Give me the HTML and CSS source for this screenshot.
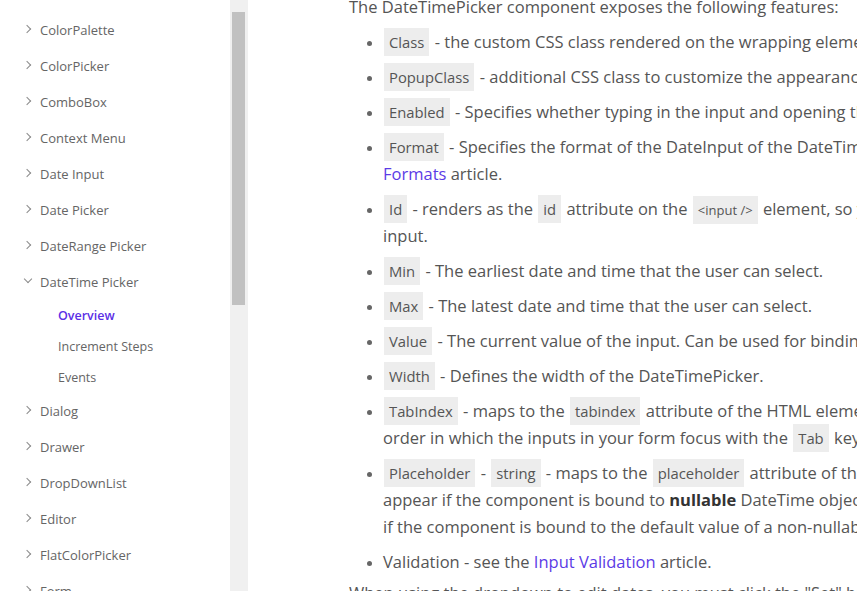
FILE: index.html
```html
<!DOCTYPE html>
<html lang="en">

<head>
    <meta charset="UTF-8">
    <meta name="viewport" content="width=device-width, initial-scale=1.0">
    <title>DateTimePicker Overview</title>
    <link rel="stylesheet" href="styles.css">
</head>

<body>
    <aside class="side-nav">
        <ul class="nav-tree">
            <li class="nav-item"><span class="chevron"></span>ColorPalette</li>
            <li class="nav-item"><span class="chevron"></span>ColorPicker</li>
            <li class="nav-item"><span class="chevron"></span>ComboBox</li>
            <li class="nav-item"><span class="chevron"></span>Context Menu</li>
            <li class="nav-item"><span class="chevron"></span>Date Input</li>
            <li class="nav-item"><span class="chevron"></span>Date Picker</li>
            <li class="nav-item"><span class="chevron"></span>DateRange Picker</li>
            <li class="nav-item open"><span class="chevron"></span>DateTime Picker</li>
            <li class="nav-sub active">Overview</li>
            <li class="nav-sub">Increment Steps</li>
            <li class="nav-sub">Events</li>
            <li class="nav-item"><span class="chevron"></span>Dialog</li>
            <li class="nav-item"><span class="chevron"></span>Drawer</li>
            <li class="nav-item"><span class="chevron"></span>DropDownList</li>
            <li class="nav-item"><span class="chevron"></span>Editor</li>
            <li class="nav-item"><span class="chevron"></span>FlatColorPicker</li>
            <li class="nav-item"><span class="chevron"></span>Form</li>
        </ul>
    </aside>
    <div class="scroll-track">
        <div class="scroll-thumb"></div>
    </div>

    <main class="article">
        <p>The DateTimePicker component exposes the following features:</p>
        <ul class="features">
            <li><code>Class</code> - the custom CSS class rendered on the wrapping element.</li>
            <li><code>PopupClass</code> - additional CSS class to customize the appearance of the DateTimePicker's dropdown.</li>
            <li><code>Enabled</code> - Specifies whether typing in the input and opening the dropdown are allowed.</li>
            <li><code>Format</code> - Specifies the format of the DateInput of the DateTimePicker. Read more about<br><a href="#">Formats</a> article.</li>
            <li><code>Id</code> - renders as the <code>id</code> attribute on the <code class="small">&lt;input /&gt;</code> element, so you can attach a label to the<br>input.</li>
            <li><code>Min</code> - The earliest date and time that the user can select.</li>
            <li><code>Max</code> - The latest date and time that the user can select.</li>
            <li><code>Value</code> - The current value of the input. Can be used for binding.</li>
            <li><code>Width</code> - Defines the width of the DateTimePicker.</li>
            <li><code>TabIndex</code> - maps to the <code>tabindex</code> attribute of the HTML element. You can use it to customize the<br>order in which the inputs in your form focus with the <code>Tab</code> key.</li>
            <li><code>Placeholder</code> - <code>string</code> - maps to the <code>placeholder</code> attribute of the HTML element. The placeholder will<br>appear if the component is bound to <strong>nullable</strong> DateTime objects - DateTime?, but will not be rendered<br>if the component is bound to the default value of a non-nullable DateTime object.</li>
            <li>Validation - see the <a href="#">Input Validation</a> article.</li>
        </ul>
        <p>When using the dropdown to edit dates, you must click the "Set" button to commit the date.</p>
    </main>
</body>

</html>
```

FILE: styles.css
```css
* {
    margin: 0;
    padding: 0;
    box-sizing: border-box;
}

body {
    display: flex;
    height: 591px;
    overflow: hidden;
    background: #fff;
    font-family: "Open Sans", Arial, sans-serif;
    color: #555;
}

/* left navigation */
.side-nav {
    width: 230px;
    flex-shrink: 0;
    padding-top: 12px;
}

.nav-tree {
    list-style: none;
}

.nav-item {
    display: flex;
    align-items: center;
    height: 36px;
    padding-left: 24px;
    font-size: 13px;
    color: #656565;
}

.chevron {
    width: 16px;
    height: 10px;
    position: relative;
}

.chevron::before {
    content: "";
    position: absolute;
    left: 0;
    top: 1px;
    width: 5px;
    height: 5px;
    border-right: 1px solid #8a8a8a;
    border-bottom: 1px solid #8a8a8a;
    transform: rotate(-45deg);
}

.nav-item.open .chevron::before {
    left: 1px;
    top: -1px;
    transform: rotate(45deg);
}

.nav-sub {
    display: flex;
    align-items: center;
    height: 31px;
    padding-left: 58px;
    font-size: 12.5px;
    color: #656565;
}

.nav-sub.active {
    color: #5b2fe6;
    font-weight: 600;
}

/* fake scrollbar of the nav panel */
.scroll-track {
    width: 18px;
    flex-shrink: 0;
    background: #f0f0f0;
    padding: 12px 3px 0 2px;
}

.scroll-thumb {
    height: 293px;
    background: #c1c1c1;
}

/* article */
.article {
    flex: 1;
    min-width: 0;
    padding-left: 101px;
    margin-top: -7px;
    font-size: 16.5px;
    line-height: 27px;
    white-space: nowrap;
    overflow: hidden;
}

.article p {
    margin-bottom: 8px;
}

.features {
    padding-left: 34px;
    list-style: disc;
}

.features li {
    margin-bottom: 8px;
}

.features li:last-child {
    margin-bottom: 4px;
}

.features li::marker {
    color: #666;
    font-size: 13px;
}

code {
    font-family: "Open Sans", Arial, sans-serif;
    font-size: 14.8px;
    line-height: 1;
    background: #ededed;
    padding: 4px 5px;
    margin: 0 1px;
}

code.small {
    font-size: 13px;
    padding: 5px 5px;
}

a {
    color: #5b3be6;
    text-decoration: none;
}

strong {
    font-weight: 700;
    color: #333;
}
```
